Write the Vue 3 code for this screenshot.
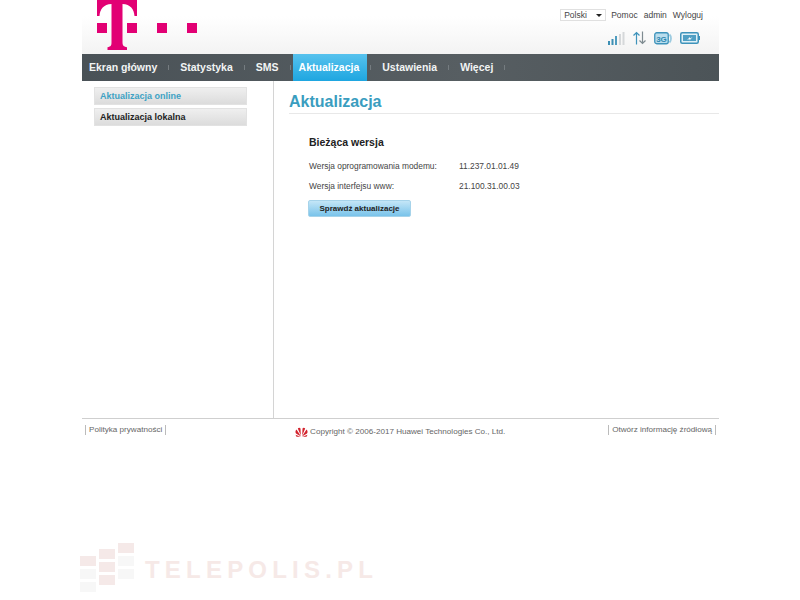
<template>
  <div class="page">
    <div class="shell">
      <header class="top">
        <svg class="logo" width="120" height="54" viewBox="0 0 120 54">
          <path fill="#e20074" d="M15 0h40v16h-2.500c-.5-7-4-11.500-12-12V42c0 3.500 1 4.500 4.500 5.200V50H25.500v-2.800c3.500-.7 4-1.700 4-5.200V4c-8 .5-11.500 5-12 12H15z"/>
          <rect x="15" y="23" width="10" height="10" fill="#e20074"/>
          <rect x="45" y="23" width="10" height="10" fill="#e20074"/>
          <rect x="75" y="23" width="10" height="10" fill="#e20074"/>
          <rect x="105" y="23" width="10" height="10" fill="#e20074"/>
        </svg>
        <div class="tools">
          <div class="links">
            <div class="select"><span>Polski</span><i class="caret"></i></div>
            <span>Pomoc</span><span>admin</span><span>Wyloguj</span>
          </div>
          <div class="status">
            <svg width="17" height="13" viewBox="0 0 17 13">
              <rect x="0" y="9" width="2" height="4" fill="#3d8fb4"/>
              <rect x="3.500" y="7" width="2" height="6" fill="#3d8fb4"/>
              <rect x="7" y="4" width="2" height="9" fill="#4f9cbf"/>
              <rect x="11" y="2" width="2" height="11" fill="#d5d8da"/>
              <rect x="14.500" y="0" width="2" height="13" fill="#d5d8da"/>
            </svg>
            <svg width="13" height="14" viewBox="0 0 13 14" fill="none" stroke-width="1.200">
              <path stroke="#3e93bb" d="M3.500 13.500V1.500M.5 4.500l3-3 3 3"/>
              <path stroke="#7e8a90" d="M9.500.5v12M6.500 9.500l3 3 3-3"/>
            </svg>
            <svg width="19" height="13" viewBox="0 0 19 13">
              <rect x=".75" y=".75" width="13.500" height="11" rx="2" fill="#b9dded" stroke="#3e93bb" stroke-width="1.300"/>
              <text x="7.500" y="9.500" text-anchor="middle" class="g">3G</text>
              <path d="M15.500 2.500c2 2 2 6 0 8" fill="none" stroke="#9ccbe0" stroke-width="1.800"/>
            </svg>
            <svg width="20" height="12" viewBox="0 0 20 12">
              <rect x=".75" y=".75" width="17.500" height="10.500" rx="1.500" fill="#dff0f7" stroke="#3e93bb" stroke-width="1.500"/>
              <rect x="18.500" y="4" width="1.500" height="4" fill="#3e93bb"/>
              <rect x="3" y="3" width="13" height="6" fill="#4f9fc4"/>
              <path d="M7 8l3-3v1.500l2.500-1.500-3 3.500V7z" fill="#fff"/>
            </svg>
          </div>
        </div>
      </header>

      <nav class="nav">
        <template v-for="(item, i) in nav" :key="item">
          <i v-if="i" class="tick"></i>
          <a class="nav-item" :class="{ on: item === 'Aktualizacja' }">{{ item }}</a>
        </template>
        <i class="tick"></i>
      </nav>

      <div class="body">
        <aside class="side">
          <a class="side-item active">Aktualizacja online</a>
          <a class="side-item">Aktualizacja lokalna</a>
        </aside>
        <main class="main">
          <h1>Aktualizacja</h1>
          <section class="panel">
            <h2>Bieżąca wersja</h2>
            <div class="row"><span class="label">Wersja oprogramowania modemu:</span><span>11.237.01.01.49</span></div>
            <div class="row"><span class="label">Wersja interfejsu www:</span><span>21.100.31.00.03</span></div>
            <button class="check">Sprawdź aktualizacje</button>
          </section>
        </main>
      </div>

      <footer class="foot">
        <span class="flink">Polityka prywatności</span>
        <div class="copy">
          <svg width="13" height="10" viewBox="0 0 13 10" fill="#d3232e">
            <path d="M6 9.500 1 6.500C0 5 .5 3.500 1.500 2.500L6 9.500zM7 9.500l5-3c1-1.500.5-3-.5-4L7 9.500zM5.800 8.500 2.800 1.500C3.500.5 5 .3 5.500 1.500l.3 7zM7.200 8.500l3-7C9.500.5 8 .3 7.500 1.500l-.3 7zM5.500 9.800H1.500L.5 7.800zM7.500 9.800h4l1-2z"/>
          </svg>
          <span>Copyright © 2006-2017 Huawei Technologies Co., Ltd.</span>
        </div>
        <span class="flink">Otwórz informację źródłową</span>
      </footer>
    </div>

    <div class="mark">
      <div class="bricks">
        <div v-for="(col, c) in bricks" :key="c" class="brick-col" :class="'c' + c">
          <i v-for="(b, i) in col" :key="i" :class="b"></i>
        </div>
      </div>
      <span class="mark-text">TELEPOLIS.PL</span>
    </div>
  </div>
</template>

<script setup>
const nav = ['Ekran główny', 'Statystyka', 'SMS', 'Aktualizacja', 'Ustawienia', 'Więcej']
const bricks = [
  ['r', 'g', 'g'],
  ['r', 'r', 'r'],
  ['r', 'g', 'g']
]
</script>

<style>
html, body { background: #fff; }
</style>

<style scoped>
.page {
  position: relative;
  width: 800px;
  height: 600px;
  overflow: hidden;
  font-family: "Liberation Sans", Arial, sans-serif;
  color: #333;
}
.shell { width: 637px; margin-left: 82px; }
.top {
  height: 54px;
  display: flex;
  justify-content: space-between;
  background: linear-gradient(#fff 30%, #f3f3f3);
}
.logo { display: block; }
.tools {
  display: flex;
  flex-direction: column;
  align-items: flex-end;
  padding: 9px 16px 0 0;
}
.links { display: flex; align-items: center; gap: 6px; font-size: 8.500px; line-height: 12px; color: #444; }
.select {
  width: 46px;
  height: 12px;
  box-sizing: border-box;
  border: 1px solid #e0e0e0;
  padding-left: 3px;
  margin-right: -1px;
  display: flex;
  align-items: center;
  justify-content: space-between;
}
.caret {
  margin-right: 3px;
  border: 3px solid transparent;
  border-top-color: #222;
  border-bottom-width: 0;
}
.status { display: flex; align-items: center; gap: 8px; margin-top: 10px; margin-right: 3px; }
.status svg:nth-child(3) { margin-right: -1px; }
.g { font: bold 8px "Liberation Sans", sans-serif; fill: #2f87b0; }

.nav {
  height: 27px;
  display: flex;
  align-items: stretch;
  background: linear-gradient(90deg, #4a5257, #575e62 60%, #4c5458);
}
.nav-item {
  padding: 0 7px;
  font-size: 10.500px;
  font-weight: 700;
  line-height: 27px;
  color: #f2f4f4;
}
.nav-item.on {
  margin: 0 -1px 0 -2px;
  padding: 0 8px 0 6px;
  background: linear-gradient(#57c2ee, #1ea6e0);
  color: #fff;
}
.tick { width: 1px; height: 5px; margin: 11px 4px 0; background: #757c80; }

.body { display: flex; height: 337px; }
.side {
  width: 179px;
  border-right: 1px solid #d4d4d4;
  padding: 6px 0 0 12px;
  display: flex;
  flex-direction: column;
  gap: 3px;
}
.side-item {
  width: 153px;
  height: 18px;
  box-sizing: border-box;
  padding-left: 5px;
  border: 1px solid #e2e2e2;
  background: linear-gradient(#efefef, #dcdcdc);
  font-size: 9px;
  font-weight: 700;
  line-height: 16px;
  color: #222;
}
.side-item.active { color: #3ea2c4; }

.main { flex: 1; padding: 0 0 0 15px; }
h1 {
  margin: 0;
  height: 32px;
  border-bottom: 1px solid #e8e8e8;
  font-size: 16px;
  line-height: 41px;
  color: #3a9dbf;
}
.panel { padding: 20px 0 0 20px; }
h2 { margin: 0 0 6px; font-size: 10.500px; line-height: 16px; color: #222; }
.row { display: flex; font-size: 8.400px; line-height: 20px; color: #444; }
.label { width: 150px; }
.check {
  display: block;
  width: 103px;
  height: 17px;
  margin: 4px 0 0 -1px;
  padding: 0;
  border: 1px solid #a6d3ea;
  border-radius: 2px;
  background: linear-gradient(#c4e6f7, #79c3ea);
  font: 700 8px/15px "Liberation Sans", sans-serif;
  color: #222;
}

.foot {
  height: 30px;
  border-top: 1px solid #cfcfcf;
  display: flex;
  justify-content: space-between;
  align-items: flex-start;
  padding: 6px 3px 0;
  font-size: 8.100px;
  color: #666;
}
.flink {
  padding: 0 3px;
  line-height: 10px;
  border-left: 1px solid #bbb;
  border-right: 1px solid #bbb;
}
.copy { display: flex; align-items: center; gap: 2px; margin: 2px 0 0 26px; line-height: 10px; }

.mark {
  position: absolute;
  left: 80px;
  top: 543px;
  display: flex;
  align-items: flex-start;
  gap: 11px;
}
.bricks { display: flex; gap: 3px; }
.brick-col { display: flex; flex-direction: column; gap: 3px; width: 16px; }
.brick-col i { display: block; height: 10px; }
.brick-col.c0 { margin-top: 13px; }
.brick-col.c1 { margin-top: 6px; }
.brick-col i.r { background: #f5e9e8; }
.brick-col i.g { background: #f7f7f7; }
.mark-text {
  margin-top: 12px;
  font-size: 24px;
  font-weight: 700;
  line-height: 30px;
  letter-spacing: 5.200px;
  color: #f6e9e7;
}
</style>
